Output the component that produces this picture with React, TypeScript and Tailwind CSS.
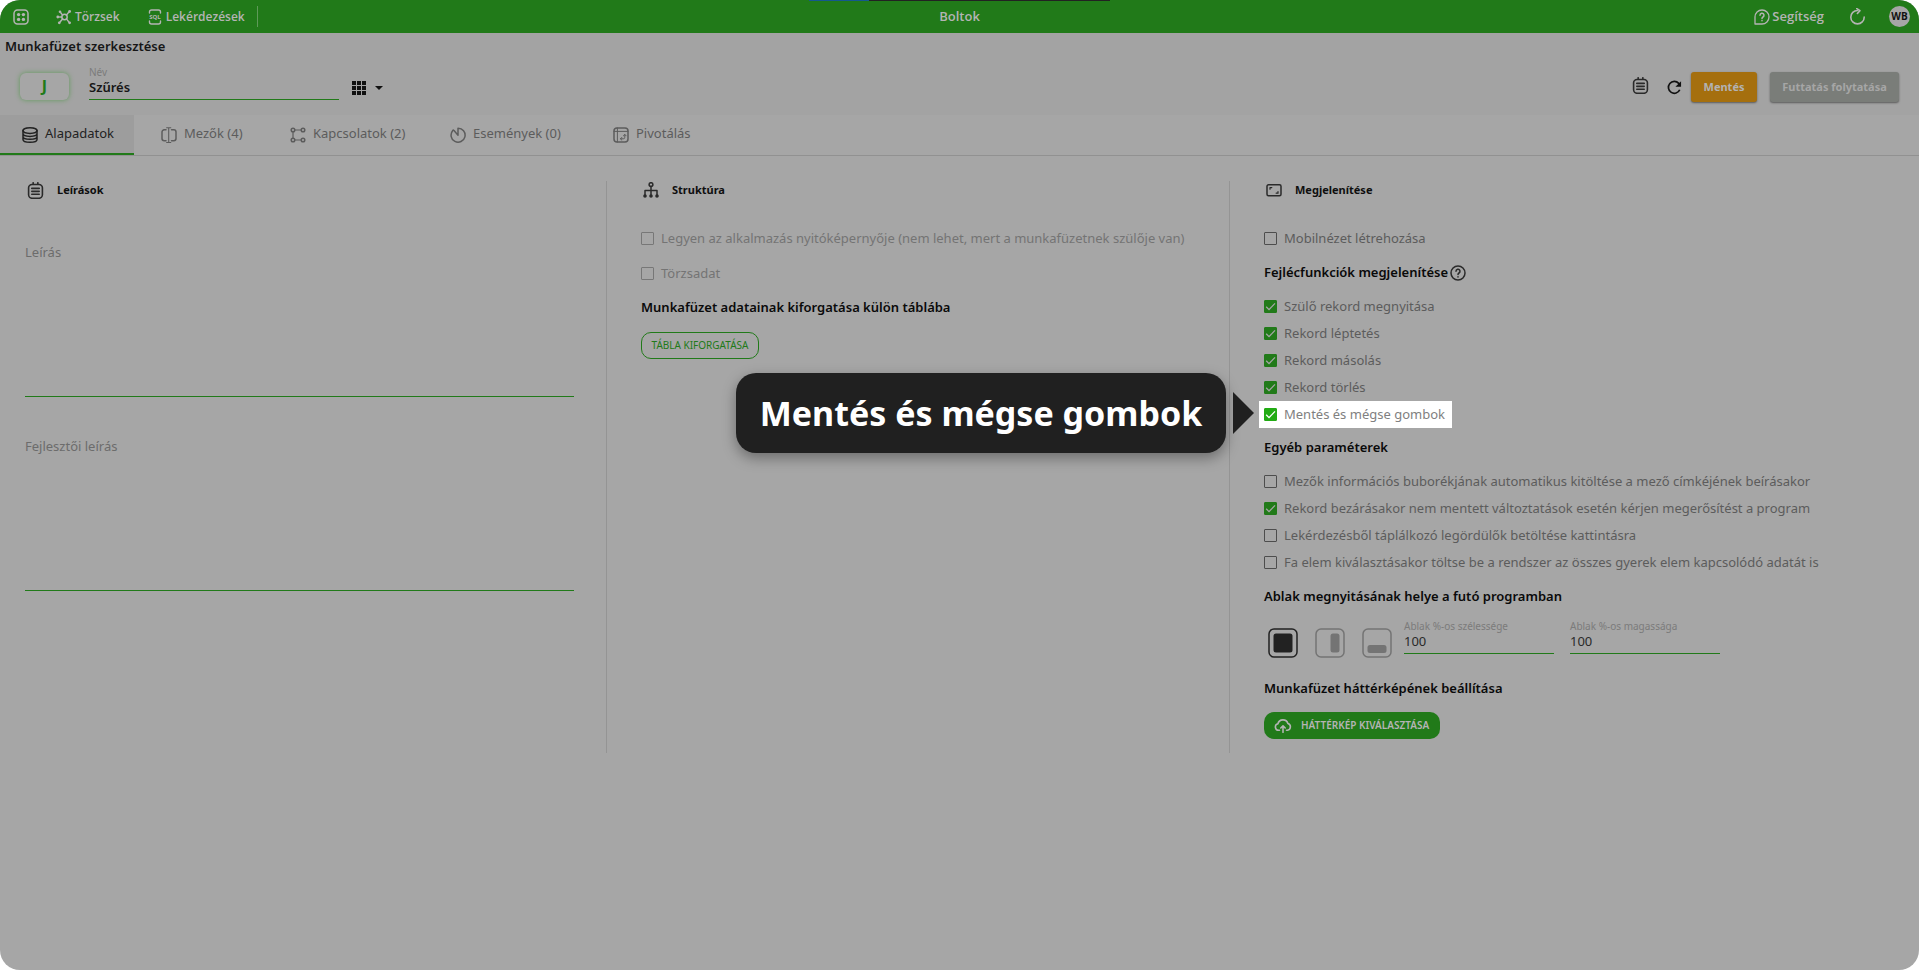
import React, { useState } from 'react'
import { clsx } from 'clsx'

type Placement = 'full' | 'right' | 'bottom';

type CheckItem = {
  key: string;
  label: string;
};

/** --- Beállítások --- */
const headerFunctions: CheckItem[] = [
  { key: "openParent", label: "Szülő rekord megnyitása" },
  { key: "step", label: "Rekord léptetés" },
  { key: "copy", label: "Rekord másolás" },
  { key: "delete", label: "Rekord törlés" },
  { key: "saveCancel", label: "Mentés és mégse gombok" },
];

const otherParams: CheckItem[] = [
  { key: "autoInfo", label: "Mezők információs buborékjának automatikus kitöltése a mező címkéjének beírásakor" },
  { key: "confirmClose", label: "Rekord bezárásakor nem mentett változtatások esetén kérjen megerősítést a program" },
  { key: "lazySelect", label: "Lekérdezésből táplálkozó legördülők betöltése kattintásra" },
  { key: "treeLoad", label: "Fa elem kiválasztásakor töltse be a rendszer az összes gyerek elem kapcsolódó adatát is" },
];

/** --- Ikonok --- */
type IconProps = { className?: string; children: React.ReactNode };

const Icon = ({ className = "size-4", children }: IconProps) => (
  <svg viewBox="0 0 16 16" className={clsx("shrink-0", className)} fill="none" stroke="currentColor" strokeWidth="1.5" strokeLinecap="round" strokeLinejoin="round" aria-hidden="true">
    {children}
  </svg>
);

const AppsIcon = () => (
  <Icon>
    <rect x="1" y="1" width="14" height="14" rx="3.5" />
    <g fill="currentColor" stroke="none">
      <circle cx="5.6" cy="5.6" r="1.7" />
      <circle cx="10.4" cy="5.6" r="1.7" />
      <circle cx="5.6" cy="10.4" r="1.7" />
      <circle cx="10.4" cy="10.4" r="1.7" />
    </g>
  </Icon>
);

const HubIcon = () => (
  <Icon className="size-4">
    <circle cx="8.5" cy="8" r="2.7" />
    <path d="M5.8 8H3.5M6.6 9.9 4 13M10.4 9.9l2.4 3M6.6 6.1 4.8 3.8M10.4 6.1l2.2-2.7" />
    <g fill="currentColor" stroke="none">
      <circle cx="1.8" cy="8" r="1.4" />
      <circle cx="3.3" cy="13.8" r="1.4" />
      <circle cx="13.6" cy="13.8" r="1.4" />
      <circle cx="4" cy="2.8" r="1.3" />
      <circle cx="13.6" cy="2.5" r="1.4" />
    </g>
  </Icon>
);

const SqlIcon = () => (
  <svg viewBox="0 0 14 16" className="h-4 w-3.5 shrink-0" fill="none" stroke="currentColor" strokeWidth="1.4" strokeLinecap="round" aria-hidden="true">
    <path d="M1.5 4V3a2 2 0 0 1 2-2h7a2 2 0 0 1 2 2v1M1.5 12v1a2 2 0 0 0 2 2h7a2 2 0 0 0 2-2v-1" />
    <text x="7" y="10.3" textAnchor="middle" fontSize="6" fontWeight="700" fill="currentColor" stroke="none" fontFamily="Open Sans, sans-serif">SQL</text>
  </svg>
);

const HelpBubbleIcon = () => (
  <Icon>
    <path d="M1 15V8a7 7 0 1 1 7 7z" strokeWidth="1.3" />
    <path d="M6 6.3a2 2 0 1 1 3 1.7c-.7.4-1 .8-1 1.5M8 11.6v.1" />
  </Icon>
);

const RotateIcon = () => (
  <Icon className="size-[17px]">
    <path d="M8 2.3a6.3 6.3 0 1 0 6.3 6.3M7.3.5l3 2-2.4 2.6" />
  </Icon>
);

const NotesIcon = () => (
  <Icon className="size-[17px]">
    <rect x="1.5" y="2.3" width="13" height="13" rx="3.2" />
    <path d="M5.8.7v1.4M10.2.7v1.4M4.5 6h7M4.5 8.8h7M4.5 11.6h7" />
  </Icon>
);

const RefreshIcon = () => (
  <Icon className="size-[15px]">
    <path d="M13.6 10.4A6.3 6.3 0 1 1 12.5 3.6l1.5 1.6" strokeWidth="1.8" strokeLinecap="butt" />
    <path d="M15 1.2v6H9z" fill="currentColor" stroke="none" />
  </Icon>
);

const GridIcon = () => (
  <svg viewBox="0 0 14 14" className="size-3.5 shrink-0" fill="currentColor" aria-hidden="true">
    {[0, 5, 10].map((y) => [0, 5, 10].map((x) => <rect key={`${x}-${y}`} x={x} y={y} width="4" height="4" />))}
  </svg>
);

const DatabaseIcon = () => (
  <Icon>
    <ellipse cx="8" cy="3.6" rx="7" ry="2.8" />
    <path d="M1 3.6v8.8c0 1.6 3.1 2.8 7 2.8s7-1.2 7-2.8V3.6M1 6.6c0 1.6 3.1 2.8 7 2.8s7-1.2 7-2.8M1 9.5c0 1.6 3.1 2.8 7 2.8s7-1.2 7-2.8" />
  </Icon>
);

const FieldsIcon = () => (
  <Icon>
    <path d="M5 2.8H3.2A2.2 2.2 0 0 0 1 5v6.5a2.2 2.2 0 0 0 2.2 2.2H5M10.5 2.8h2.3A2.2 2.2 0 0 1 15 5v6.5a2.2 2.2 0 0 1-2.2 2.2h-2.3" />
    <path d="M7.7 1v14.5M5.6.7h4.2M5.6 15.5h4.2" strokeWidth="1.1" />
  </Icon>
);

const LinksIcon = () => (
  <Icon>
    <circle cx="3" cy="3" r="1.8" />
    <circle cx="13" cy="3" r="1.8" />
    <circle cx="3" cy="13" r="1.8" />
    <circle cx="13" cy="13" r="1.8" />
    <path d="M4.8 3h6.4M3 4.8v6.4M4.8 13h6.4" strokeWidth="1.2" />
  </Icon>
);

// nyitott kör, a bal felső negyedben a középpontig húzott csúccsal
const EventsIcon = () => (
  <Icon>
    <path d="M8 8.2V1.2a7 7 0 1 1-5.2 2.4Q3.2 2.6 4 3.6z" />
  </Icon>
);

const PivotIcon = () => (
  <Icon>
    <rect x="1" y="1" width="14" height="14" rx="3" />
    <path d="M1 4.4h14M4.4 1v14" strokeWidth="1" />
    <path d="M7.5 11.8h2.8a1.5 1.5 0 0 0 1.5-1.5V7.6M8.8 10.4l-1.4 1.4 1.4 1.3M10.4 8.8l1.4-1.4 1.3 1.4" strokeWidth="1" />
  </Icon>
);

const TreeIcon = () => (
  <Icon>
    <circle cx="8" cy="2.6" r="1.9" />
    <path d="M8 4.5V13M2 13.5V8.5h12v5" />
    <g fill="currentColor" stroke="none">
      <circle cx="2" cy="14" r="1.8" />
      <circle cx="8" cy="14" r="1.8" />
      <circle cx="14" cy="14" r="1.8" />
    </g>
  </Icon>
);

const ScreenIcon = () => (
  <Icon>
    <rect x="1" y="2.8" width="14" height="11" rx="1.5" />
    <path d="M4 7.2V5.6h1.8M12 9.6v1.6h-1.8" strokeWidth="1.2" />
  </Icon>
);

const HelpCircleIcon = () => (
  <Icon>
    <circle cx="8" cy="8" r="7" />
    <path d="M6 6.3a2 2 0 1 1 3 1.7c-.7.4-1 .8-1 1.5M8 11.8v.1" />
  </Icon>
);

const CloudIcon = () => (
  <svg viewBox="0 0 18 14" className="h-3.5 w-[18px] shrink-0" fill="none" stroke="currentColor" strokeWidth="1.6" strokeLinecap="round" strokeLinejoin="round" aria-hidden="true">
    <path d="M5.5 11.3H4.6a3.3 3.3 0 0 1-.7-6.5 5.2 5.2 0 0 1 10-.3 3.5 3.5 0 0 1-.4 6.8h-1M9 13.3V7M6.8 9 9 6.8 11.2 9" />
  </svg>
);

const placementShapes: Record<Placement, React.ReactNode> = {
  full: <rect x="5.5" y="5.5" width="19" height="19" rx="2.5" />,
  right: <rect x="15.5" y="5.5" width="9" height="19" rx="2.5" />,
  bottom: <rect x="5.5" y="17" width="19" height="8" rx="2.5" />,
};

const placementLabels: Record<Placement, string> = {
  full: "Teljes ablak",
  right: "Jobb oldal",
  bottom: "Alul",
};

/** --- Űrlap elemek --- */
type CheckProps = {
  label: string;
  checked: boolean;
  onChange: () => void;
  disabled?: boolean;
  highlighted?: boolean;
};

const Check = ({ label, checked, onChange, disabled, highlighted }: CheckProps) => (
  <label className={clsx("flex h-[27px] items-center gap-[7px] whitespace-nowrap text-[13px]", highlighted ? "text-[#808080]" : disabled ? "text-[#747474]" : "text-[#5c5c5c]")}>
    <span className="relative flex size-[13px] shrink-0">
      <input
        type="checkbox"
        checked={checked}
        disabled={disabled}
        onChange={onChange}
        className={clsx(
          "size-[13px] appearance-none rounded-[1px] border",
          disabled ? "border-[#777777]" : "border-[#4d4d4d]",
          highlighted ? "checked:border-[#22ab14] checked:bg-[#22ab14]" : "checked:border-[#217a19] checked:bg-[#217a19]"
        )}
      />
      {checked && (
        <svg viewBox="0 0 13 13" className={clsx("pointer-events-none absolute inset-0 size-[13px]", highlighted ? "text-white" : "text-[#a6a6a6]")} fill="none" stroke="currentColor" strokeWidth="1.3" aria-hidden="true">
          <path d="M2.2 6.8 5 9.6 11 3.4" />
        </svg>
      )}
    </span>
    {label}
  </label>
);

type FieldProps = {
  id: string;
  label: string;
  value: string;
  onChange: (v: string) => void;
  className?: string;
  bold?: boolean;
};

const Field = ({ id, label, value, onChange, className, bold }: FieldProps) => (
  <div className={clsx("flex flex-col", className)}>
    <label htmlFor={id} className="h-3 text-[10px] leading-3 text-[#7b7b7b]">{label}</label>
    <input
      id={id}
      value={value}
      onChange={(e) => onChange(e.target.value)}
      className={clsx("h-[22px] w-full border-b border-[#217a19] bg-transparent pb-1 outline-none", bold ? "text-[13px] font-semibold text-[#161616]" : "text-[13px] text-[#2a2a2a]")}
    />
  </div>
);

const SectionTitle = ({ icon, children }: { icon: React.ReactNode; children: React.ReactNode }) => (
  <h2 className="flex h-[18px] items-center gap-[13px] px-0.5 text-[11px] font-bold text-[#0f0f0f]">
    <span className="text-[#2a2a2a]">{icon}</span>
    {children}
  </h2>
);

const Heading = ({ children }: { children: React.ReactNode }) => (
  <h3 className="flex h-5 items-center gap-0.5 text-[13px] font-semibold whitespace-nowrap text-[#0a0a0a]">{children}</h3>
);

const tabs = [
  { key: "base", label: "Alapadatok", icon: <DatabaseIcon />, width: "w-[134px]" },
  { key: "fields", label: "Mezők (4)", icon: <FieldsIcon />, width: "ml-[5px] w-[129px]" },
  { key: "links", label: "Kapcsolatok (2)", icon: <LinksIcon />, width: "w-[160px]" },
  { key: "events", label: "Események (0)", icon: <EventsIcon />, width: "w-[163px]" },
  { key: "pivot", label: "Pivotálás", icon: <PivotIcon />, width: "w-[124px]" },
];

const App: React.FC = () => {
  const [activeTab, setActiveTab] = useState("base");
  const [name, setName] = useState("Szűrés");
  const [width, setWidth] = useState("100");
  const [height, setHeight] = useState("100");
  const [placement, setPlacement] = useState<Placement>("full");
  const [checks, setChecks] = useState<Record<string, boolean>>({
    openParent: true,
    step: true,
    copy: true,
    delete: true,
    saveCancel: true,
    confirmClose: true,
  });

  const toggle = (key: string) => setChecks((prev) => ({ ...prev, [key]: !prev[key] }));

  return (
    <div className="bg-white font-['Noto_Sans',sans-serif]">
      <div className="min-h-screen overflow-hidden rounded-[20px] bg-[#a6a6a6]">
        {/* Felső sáv */}
        <nav className="relative grid h-[33px] grid-cols-[1fr_auto_1fr] items-center bg-[#217a19] font-['Open_Sans',sans-serif] text-[13px] font-semibold text-[#b4b4b4]">
          <div className="absolute top-0 left-1/2 -ml-[151px] flex h-px w-[301px] bg-[#222222]">
            <div className="w-[60px] bg-[#15588f]" />
          </div>
          <div className="flex items-center pl-[13px] text-xs">
            <button type="button" aria-label="Alkalmazások"><AppsIcon /></button>
            <button type="button" className="ml-[27px] flex items-center gap-[3px]"><HubIcon />Törzsek</button>
            <button type="button" className="ml-7 flex items-center gap-1"><SqlIcon />Lekérdezések</button>
            <div className="ml-3 h-[21px] w-px bg-[#5f9a59]" />
          </div>
          <h1>Boltok</h1>
          <div className="flex items-center justify-end pr-[9px]">
            <button type="button" className="flex items-center gap-0.5"><HelpBubbleIcon />Segítség</button>
            <button type="button" className="ml-[25px]" aria-label="Újratöltés"><RotateIcon /></button>
            <button type="button" className="ml-[23px] size-[21px] rounded-full bg-[#a6a6a6] text-[10px] font-bold text-[#111111]">WB</button>
          </div>
        </nav>

        {/* Fejléc */}
        <header className="bg-[#a3a3a3]">
          <p className="h-[26px] pl-[5px] text-[13px] leading-[26px] font-semibold text-[#161616]">Munkafüzet szerkesztése</p>
          <div className="flex h-14 items-center justify-between pr-5 pl-5">
            <div className="flex items-end pb-2">
              <button type="button" className="h-[27px] w-[49px] rounded-md bg-[#a6a6a6] text-base leading-[27px] font-bold text-[#217a19] shadow-[0_0_5px_#5f9a59]">J</button>
              <Field id="name" label="Név" value={name} onChange={setName} className="ml-5 w-[250px]" bold />
              <button type="button" className="mb-[5px] ml-[13px] flex items-center gap-[9px] text-[#111111]" aria-label="Nézet">
                <GridIcon />
                <svg viewBox="0 0 8 4" className="h-1 w-2" fill="currentColor" aria-hidden="true"><path d="M0 0h8L4 4z" /></svg>
              </button>
            </div>
            <div className="flex items-center">
              <button type="button" className="pb-1 text-[#2a2a2a]" aria-label="Leírás"><NotesIcon /></button>
              <button type="button" className="ml-[18px] text-[#111111]" aria-label="Frissítés"><RefreshIcon /></button>
              <button type="button" className="ml-[9px] h-[30px] w-[66px] rounded-[3px] bg-[#a56f0e] text-[11px] font-bold text-[#b3b3b3] shadow-[0_1px_2px_#5a5a5a]">Mentés</button>
              <button type="button" className="ml-[13px] h-[30px] w-[129px] rounded-[3px] bg-[#7a7d79] text-[11px] font-bold text-[#a6a6a6] shadow-[0_1px_2px_#5a5a5a]">Futtatás folytatása</button>
            </div>
          </div>
        </header>

        <div role="tablist" className="flex h-[41px] border-b border-[#919191]">
          {tabs.map((tab) => (
            <button
              key={tab.key}
              type="button"
              role="tab"
              aria-selected={activeTab === tab.key}
              onClick={() => setActiveTab(tab.key)}
              className={clsx(
                "flex h-10 items-center gap-[7px] border-b-2 pl-[22px] text-[13px] whitespace-nowrap",
                tab.width,
                activeTab === tab.key ? "border-[#217a19] bg-[#9d9d9d] text-[#222222]" : "border-transparent text-[#5c5c5c]"
              )}
            >
              <span className="pt-0.5">{tab.icon}</span>
              {tab.label}
            </button>
          ))}
        </div>

        <main className="grid grid-cols-[607fr_623fr_689fr] pt-[25px] pb-6">
          <section className="border-r border-[#949494] pr-8 pb-3.5 pl-[25px]">
            <SectionTitle icon={<NotesIcon />}>Leírások</SectionTitle>
            <div className="mt-[43px] flex flex-col">
              <label htmlFor="desc" className="h-5 text-[13px] leading-5 text-[#6c6c6c]">Leírás</label>
              <textarea id="desc" className="h-[135px] resize-none border-b border-[#217a19] outline-none" />
            </div>
            <div className="mt-[39px] flex flex-col">
              <label htmlFor="devDesc" className="h-5 text-[13px] leading-5 text-[#6c6c6c]">Fejlesztői leírás</label>
              <textarea id="devDesc" className="h-[135px] resize-none border-b border-[#217a19] outline-none" />
            </div>
          </section>

          <section className="border-r border-[#949494] pr-8 pb-3.5 pl-[34px]">
            <SectionTitle icon={<TreeIcon />}>Struktúra</SectionTitle>
            <div className="mt-[26px] flex flex-col items-start gap-2">
              <Check label="Legyen az alkalmazás nyitóképernyője (nem lehet, mert a munkafüzetnek szülője van)" checked={!!checks.startScreen} onChange={() => toggle("startScreen")} disabled />
              <Check label="Törzsadat" checked={!!checks.master} onChange={() => toggle("master")} disabled />
            </div>
            <div className="mt-[11px]"><Heading>Munkafüzet adatainak kiforgatása külön táblába</Heading></div>
            <button type="button" className="mt-3.5 h-[27px] w-[118px] rounded-[10px] border border-[#217a19] text-[10px] text-[#217a19]">TÁBLA KIFORGATÁSA</button>
          </section>

          <section className="pr-8 pb-3.5 pl-[34px]">
            <SectionTitle icon={<ScreenIcon />}>Megjelenítése</SectionTitle>
            <div className="mt-[26px] flex">
              <Check label="Mobilnézet létrehozása" checked={!!checks.mobile} onChange={() => toggle("mobile")} />
            </div>
            <div className="mt-[11px]">
              <Heading>
                Fejlécfunkciók megjelenítése
                <button type="button" aria-label="Súgó" className="text-[#2a2a2a]"><HelpCircleIcon /></button>
              </Heading>
            </div>
            <div className="mt-2.5 flex flex-col items-start">
              {headerFunctions.map((item) => {
                const check = <Check key={item.key} label={item.label} checked={!!checks[item.key]} onChange={() => toggle(item.key)} highlighted={item.key === "saveCancel"} />;
                if (item.key !== "saveCancel") return check;
                return (
                  <div key={item.key} className="relative -ml-[5px] w-[193px] bg-white pl-[5px]">
                    {check}
                    <div role="tooltip" className="absolute -top-7 right-full mr-[5px] flex items-center gap-[7px]">
                      <div className="flex h-20 w-[490px] items-center justify-center rounded-[20px] bg-[#202020] text-[34px] font-bold whitespace-nowrap text-white shadow-[0_5px_14px_rgba(0,0,0,0.35)]">
                        Mentés és mégse gombok
                      </div>
                      <svg viewBox="0 0 21 42" className="h-[42px] w-[21px]" fill="#202020" aria-hidden="true"><path d="M0 0 21 21 0 42z" /></svg>
                    </div>
                  </div>
                );
              })}
            </div>
            <div className="mt-2.5"><Heading>Egyéb paraméterek</Heading></div>
            <div className="mt-2.5 flex flex-col items-start">
              {otherParams.map((item) => (
                <Check key={item.key} label={item.label} checked={!!checks[item.key]} onChange={() => toggle(item.key)} />
              ))}
            </div>
            <div className="mt-[11px]"><Heading>Ablak megnyitásának helye a futó programban</Heading></div>
            <div className="mt-[13px] flex items-start">
              <div className="mt-2 ml-1 flex gap-[17px]" role="radiogroup">
                {(["full", "right", "bottom"] as Placement[]).map((p) => (
                  <label key={p} className={clsx("relative block size-[30px]", placement === p ? "text-[#222222]" : "text-[#747474]")}>
                    <input type="radio" name="placement" value={p} checked={placement === p} onChange={() => setPlacement(p)} aria-label={placementLabels[p]} className="sr-only" />
                    <svg viewBox="0 0 30 30" className="size-[30px]" fill="currentColor" aria-hidden="true">
                      <rect x="1" y="1" width="28" height="28" rx="5" fill="none" stroke="currentColor" strokeWidth="1.5" />
                      {placementShapes[p]}
                    </svg>
                  </label>
                ))}
              </div>
              <Field id="winWidth" label="Ablak %-os szélessége" value={width} onChange={setWidth} className="ml-3 w-[150px]" />
              <Field id="winHeight" label="Ablak %-os magassága" value={height} onChange={setHeight} className="ml-4 w-[150px]" />
            </div>
            <div className="mt-[21px]"><Heading>Munkafüzet háttérképének beállítása</Heading></div>
            <button type="button" className="mt-[13px] flex h-[27px] w-44 items-center gap-[9px] rounded-[10px] bg-[#217a19] pl-2.5 text-[10px] font-semibold whitespace-nowrap text-[#b4b4b4]">
              <CloudIcon />
              HÁTTÉRKÉP KIVÁLASZTÁSA
            </button>
          </section>
        </main>
      </div>
    </div>
  );
}

export default App
